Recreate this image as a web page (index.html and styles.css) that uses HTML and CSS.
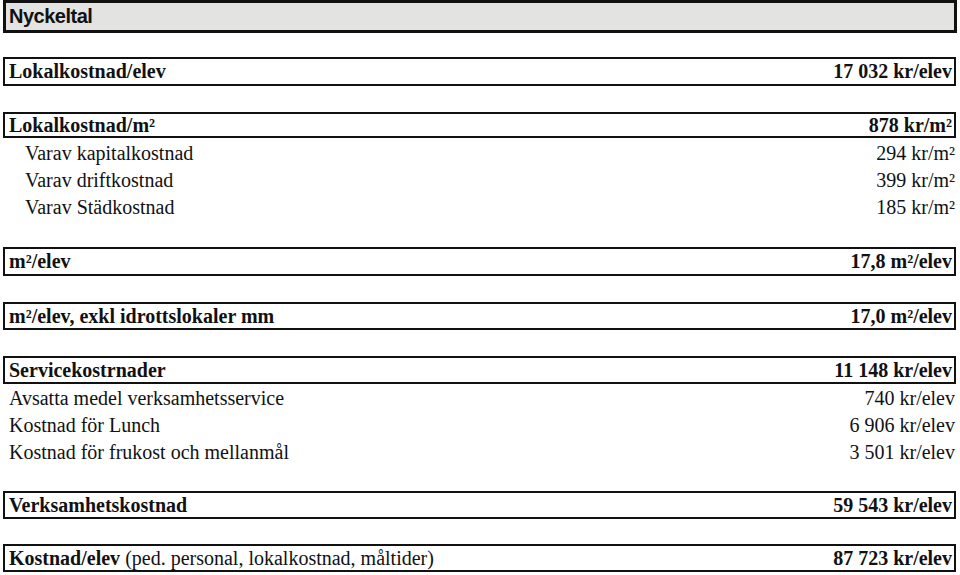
FILE: index.html
```html
<!DOCTYPE html>
<html lang="sv">
<head>
<meta charset="utf-8">
<title>Nyckeltal</title>
<link rel="stylesheet" href="styles.css">
</head>
<body>
<div class="sheet">
  <div class="title">Nyckeltal</div>

  <div class="box b-a"><span class="strong">Lokalkostnad/elev</span><span class="strong">17 032 kr/elev</span></div>

  <div class="box b-b"><span class="strong">Lokalkostnad/m²</span><span class="strong">878 kr/m²</span></div>
  <div class="subs">
    <div class="sub indent"><span>Varav kapitalkostnad</span><span>294 kr/m²</span></div>
    <div class="sub indent"><span>Varav driftkostnad</span><span>399 kr/m²</span></div>
    <div class="sub indent"><span>Varav Städkostnad</span><span>185 kr/m²</span></div>
  </div>

  <div class="box b-c"><span class="strong">m²/elev</span><span class="strong">17,8 m²/elev</span></div>

  <div class="box b-d"><span class="strong">m²/elev, exkl idrottslokaler mm</span><span class="strong">17,0 m²/elev</span></div>

  <div class="box b-e"><span class="strong">Servicekostrnader</span><span class="strong">11 148 kr/elev</span></div>
  <div class="subs subs-2">
    <div class="sub"><span>Avsatta medel verksamhetsservice</span><span>740 kr/elev</span></div>
    <div class="sub"><span>Kostnad för Lunch</span><span>6 906 kr/elev</span></div>
    <div class="sub"><span>Kostnad för frukost och mellanmål</span><span>3 501 kr/elev</span></div>
  </div>

  <div class="box b-f"><span class="strong">Verksamhetskostnad</span><span class="strong">59 543 kr/elev</span></div>

  <div class="box b-g"><span><span class="strong">Kostnad/elev</span> (ped. personal, lokalkostnad, måltider)</span><span class="strong">87 723 kr/elev</span></div>
</div>
</body>
</html>
```

FILE: styles.css
```css
html, body {
  margin: 0;
  padding: 0;
  background: #ffffff;
}

.sheet {
  display: flex;
  flex-direction: column;
  width: 954px;
  margin-left: 3px;
  font-family: "Liberation Serif", "Times New Roman", serif;
  font-size: 20px;
  color: #111111;
}

.title {
  box-sizing: border-box;
  height: 33px;
  border: 3px solid #111111;
  background: #e3e3e1;
  font-family: "Liberation Sans", Arial, sans-serif;
  font-weight: bold;
  font-size: 20px;
  letter-spacing: -0.5px;
  line-height: 27px;
  padding-left: 3px;
}

.box {
  box-sizing: border-box;
  display: flex;
  justify-content: space-between;
  align-items: center;
  width: 953px;
  height: 29px;
  border: 2px solid #111111;
  padding: 0 2px 0 4px;
  white-space: nowrap;
}

.strong {
  font-weight: bold;
}

.b-a { margin-top: 24px; }
.b-b { margin-top: 26px; height: 26px; }
.b-c { margin-top: 26px; }
.b-d { margin-top: 26px; height: 28px; }
.b-e { margin-top: 26px; height: 28px; }
.b-f { margin-top: 25px; height: 28px; }
.b-g { margin-top: 25px; height: 28px; }

.subs {
  display: flex;
  flex-direction: column;
  margin-top: 2px;
}

.subs-2 {
  margin-top: 1px;
}

.sub {
  display: flex;
  justify-content: space-between;
  height: 27px;
  line-height: 27px;
  padding: 0 2px 0 6px;
  white-space: nowrap;
}

.sub.indent {
  padding-left: 22px;
}
```
